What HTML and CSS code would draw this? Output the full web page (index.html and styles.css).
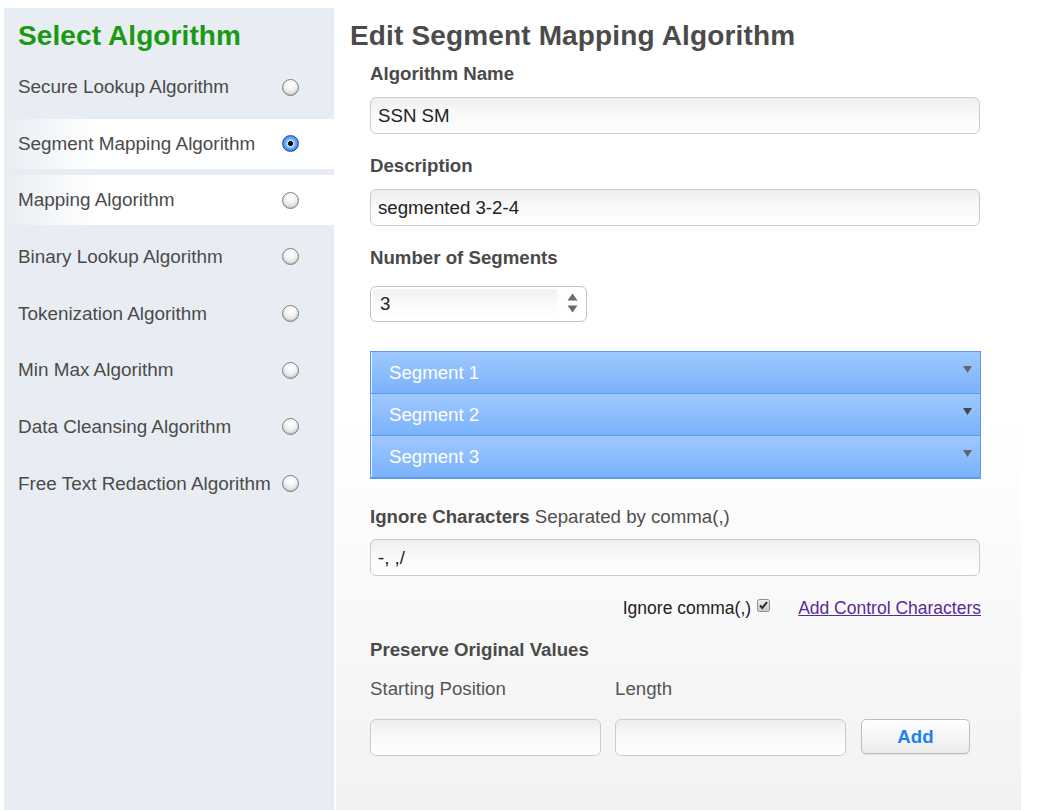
FILE: index.html
```html
<!DOCTYPE html>
<html lang="en">
<head>
<meta charset="utf-8">
<title>Edit Segment Mapping Algorithm</title>
<link rel="stylesheet" href="styles.css">
</head>
<body>
<div class="page">
  <aside class="sidebar">
    <h2 class="side-title">Select Algorithm</h2>
    <ul class="algo-list">
      <li class="algo"><span class="algo-name">Secure Lookup Algorithm</span><span class="radio"></span></li>
      <li class="algo highlight"><span class="algo-name">Segment Mapping Algorithm</span><span class="radio checked"></span></li>
      <li class="algo highlight"><span class="algo-name">Mapping Algorithm</span><span class="radio"></span></li>
      <li class="algo"><span class="algo-name">Binary Lookup Algorithm</span><span class="radio"></span></li>
      <li class="algo"><span class="algo-name">Tokenization Algorithm</span><span class="radio"></span></li>
      <li class="algo"><span class="algo-name">Min Max Algorithm</span><span class="radio"></span></li>
      <li class="algo"><span class="algo-name">Data Cleansing Algorithm</span><span class="radio"></span></li>
      <li class="algo"><span class="algo-name">Free Text Redaction Algorithm</span><span class="radio"></span></li>
    </ul>
  </aside>

  <main class="panel">
    <h1 class="panel-title">Edit Segment Mapping Algorithm</h1>
    <div class="form">
      <div class="field-label label-name">Algorithm Name</div>
      <div class="text-input input-name">SSN SM</div>

      <div class="field-label label-desc">Description</div>
      <div class="text-input input-desc">segmented 3-2-4</div>

      <div class="field-label label-count">Number of Segments</div>
      <div class="number-input">
        <div class="number-value">3</div>
        <svg class="spinner" width="11" height="20" viewBox="0 0 11 20"><polygon points="0.5,7.5 5.5,0.5 10.5,7.5" fill="#6e6b68"/><polygon points="0.5,12.5 10.5,12.5 5.5,19.5" fill="#6e6b68"/></svg>
      </div>

      <div class="accordion">
        <div class="seg"><span>Segment 1</span><svg class="caret" width="9" height="7" viewBox="0 0 9 7"><polygon points="0,0 9,0 4.5,7" fill="#666"/></svg></div>
        <div class="seg"><span>Segment 2</span><svg class="caret" width="9" height="7" viewBox="0 0 9 7"><polygon points="0,0 9,0 4.5,7" fill="#474747"/></svg></div>
        <div class="seg"><span>Segment 3</span><svg class="caret" width="9" height="7" viewBox="0 0 9 7"><polygon points="0,0 9,0 4.5,7" fill="#666"/></svg></div>
      </div>

      <div class="field-label label-ignore">Ignore Characters <span class="hint">Separated by comma(,)</span></div>
      <div class="text-input input-ignore">-, ,/</div>

      <div class="check-row">
        <span class="check-text">Ignore comma(,)</span>
        <svg class="checkbox" width="13" height="13" viewBox="0 0 13 13">
          <defs><linearGradient id="cb" x1="0" y1="0" x2="0" y2="1"><stop offset="0" stop-color="#ececec"/><stop offset="1" stop-color="#c9c9c9"/></linearGradient></defs>
          <rect x="0.5" y="0.5" width="12" height="12" rx="2" fill="url(#cb)" stroke="#8e8e8e"/>
          <path d="M3 6.5 L5.3 9 L10 3.2" fill="none" stroke="#2a2a2a" stroke-width="2"/>
        </svg>
        <a class="link" href="#">Add Control Characters</a>
      </div>

      <div class="field-label label-preserve">Preserve Original Values</div>
      <div class="pres-grid pres-labels">
        <span class="sub-label">Starting Position</span>
        <span class="sub-label">Length</span>
      </div>
      <div class="pres-grid pres-inputs">
        <div class="text-input small"></div>
        <div class="text-input small"></div>
        <button class="add-btn">Add</button>
      </div>
    </div>
  </main>
</div>
</body>
</html>
```

FILE: styles.css
```css
* { box-sizing: border-box; }

body {
  margin: 0;
  padding: 8px 0 0 4px;
  background: #fff;
  font-family: "Liberation Sans", Arial, sans-serif;
  overflow: hidden;
}

.page {
  display: flex;
  gap: 2px;
  height: 802px;
}

/* Sidebar */
.sidebar {
  width: 330px;
  background: #e8edf3;
}

.side-title {
  margin: 0;
  padding: 12px 14px 10px;
  font-size: 28px;
  line-height: 32px;
  font-weight: bold;
  color: #1a9a14;
  letter-spacing: 0.1px;
}

.algo-list {
  list-style: none;
  margin: 0;
  padding: 0;
  display: flex;
  flex-direction: column;
  gap: 6.67px;
}

.algo {
  height: 50px;
  display: flex;
  align-items: center;
  padding-left: 14px;
  font-size: 18.9px;
  color: #4b4b4b;
}

.algo.highlight {
  background: linear-gradient(to right, #e8edf3 0, #fff 92px);
}

.algo-name {
  width: 264px;
  white-space: nowrap;
}

.radio {
  width: 17px;
  height: 17px;
  border-radius: 50%;
  border: 1px solid #7e7e7e;
  background: radial-gradient(circle at 50% 30%, #fff 0, #f6f6f6 35%, #cdcdcd 100%);
  box-shadow: inset 0 -1px 1px rgba(0,0,0,0.15);
}

.radio.checked {
  border-color: #24529f;
  background: radial-gradient(circle at 50% 50%, #111 0, #111 2.2px, #c3e4ff 2.8px, #64aaf6 50%, #2563cf 100%);
}

/* Main panel */
.panel {
  width: 685px;
  padding: 12px 0 0 14px;
  background: linear-gradient(to bottom, #fff 0, #fff 52%, #f2f2f2 100%);
}

.panel-title {
  margin: 0;
  font-size: 28px;
  line-height: 32px;
  font-weight: bold;
  color: #4b4b4b;
  letter-spacing: 0.15px;
}

.form {
  padding-left: 20px;
  width: 631px;
}

.field-label {
  font-size: 18.67px;
  line-height: 22px;
  font-weight: bold;
  color: #4a4a4a;
}

.hint {
  font-weight: normal;
  color: #4f4f4f;
}

.label-name { margin-top: 11px; }
.label-desc { margin-top: 21px; }
.label-count { margin-top: 21px; }
.label-ignore { margin-top: 27px; }
.label-preserve { margin-top: 20px; }

.text-input {
  width: 610px;
  height: 37px;
  border: 1px solid #cbcbcb;
  border-radius: 6px;
  background: linear-gradient(to bottom, #eeeeee 0, #f9f9f9 45%, #fff 100%);
  padding-left: 7px;
  display: flex;
  align-items: center;
  font-size: 18.67px;
  color: #222;
}

.input-name, .input-desc { margin-top: 12px; }
.input-ignore { margin-top: 11px; }

.number-input {
  margin-top: 17px;
  width: 217px;
  height: 36px;
  border: 1px solid #c4c4c4;
  border-radius: 6px;
  background: #fff;
  display: flex;
  align-items: center;
  padding-left: 2px;
}

.number-value {
  width: 184px;
  height: 30px;
  padding-left: 7px;
  border-radius: 3px;
  background: linear-gradient(to bottom, #f0f0f0 0, #fafafa 50%, #fff 100%);
  display: flex;
  align-items: center;
  font-size: 18.67px;
  color: #222;
}

.spinner {
  margin-left: 10px;
  margin-top: -3px;
}

/* Accordion */
.accordion {
  margin-top: 29px;
  width: 611px;
  border: 1px solid #5a9bee;
}

.seg {
  height: 42px;
  display: flex;
  align-items: center;
  justify-content: space-between;
  padding: 0 8px 0 18px;
  background: linear-gradient(to bottom, #9fc8ff 0, #7ab2fb 100%);
  border-bottom: 1px solid #5d9ae6;
  box-shadow: inset 1px 0 0 rgba(255,255,255,0.75);
  color: #fff;
  font-size: 18.67px;
}

.caret {
  align-self: flex-start;
  margin-top: 14px;
}

/* Checkbox row */
.check-row {
  margin-top: 21px;
  width: 611px;
  display: flex;
  justify-content: flex-end;
  align-items: center;
  font-size: 17.5px;
  line-height: 22px;
}

.check-text { color: #222; }

.checkbox {
  margin-left: 6px;
  margin-bottom: 6px;
}

.link {
  margin-left: 28px;
  color: #5a2a96;
  text-decoration: underline;
}

/* Preserve */
.pres-grid {
  display: grid;
  grid-template-columns: 231px 231px 110px;
  column-gap: 14px;
}

.pres-labels {
  margin-top: 17px;
  font-size: 18.67px;
  line-height: 22px;
  color: #555;
}

.pres-inputs {
  margin-top: 19px;
  align-items: start;
}

.text-input.small { width: 231px; }

.add-btn {
  justify-self: end;
  width: 109px;
  height: 35px;
  border: 1px solid #bdbdbd;
  border-radius: 5px;
  background: linear-gradient(to bottom, #fff 0, #f4f4f4 60%, #e9e9e9 100%);
  box-shadow: 0 1px 1px rgba(0,0,0,0.08);
  font-family: "Liberation Sans", Arial, sans-serif;
  font-size: 18.67px;
  font-weight: bold;
  color: #1f80f0;
  padding: 0;
}
```
